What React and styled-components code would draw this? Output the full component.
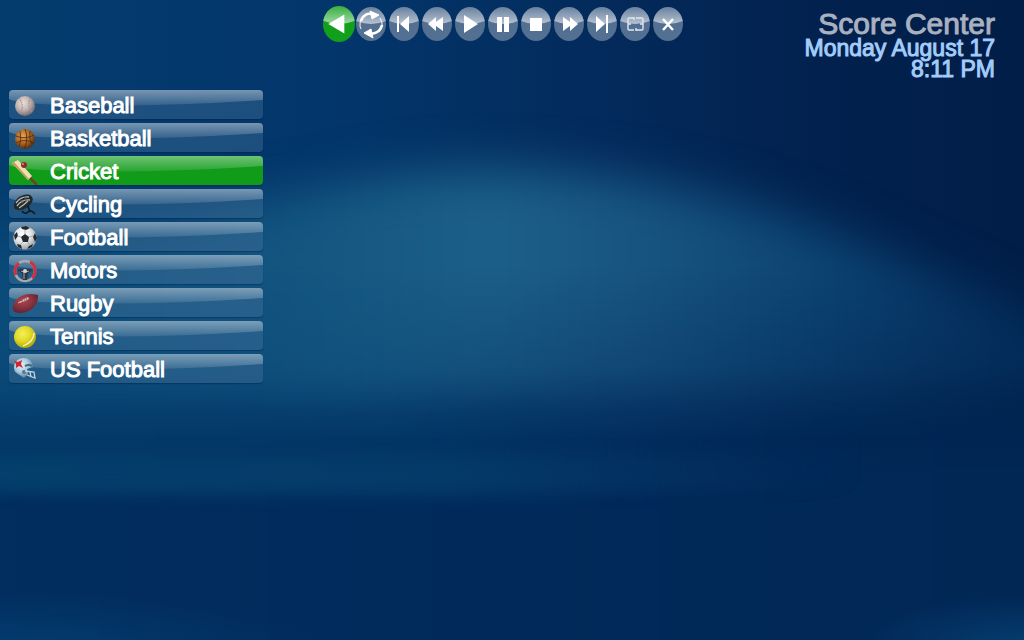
import React, { useState } from "react";
import styled, { createGlobalStyle, css } from "styled-components";

const GlobalStyle = createGlobalStyle`
  * { box-sizing: border-box; }
  body { margin: 0; background: #022c5c; font-family: "Liberation Sans", Arial, sans-serif; }
`;

const Screen = styled.div`
  position: relative;
  isolation: isolate;
  min-height: 100vh;
  overflow: hidden;
`;

const Wallpaper = styled.svg`
  position: absolute;
  inset: 0;
  width: 100%;
  height: 100%;
  z-index: -1;
`;

const Header = styled.header`
  display: grid;
  grid-template-columns: 1fr auto 1fr;
  align-items: start;
  padding: 6px 29px 0 11px;
  min-height: 90px;
`;

const Toolbar = styled.nav`
  grid-column: 2;
  display: flex;
  align-items: center;
  gap: 3px;
`;

const RoundButton = styled.button`
  display: block;
  padding: 0;
  border: 0;
  background: none;
  width: ${(p) => (p.$active ? 32 : 30)}px;
  height: ${(p) => (p.$active ? 36 : 34)}px;
  margin-right: ${(p) => (p.$active ? -2 : 0)}px;
  cursor: pointer;
  svg { display: block; width: 100%; height: 100%; }
`;

const Info = styled.div`
  text-align: right;
  white-space: nowrap;
`;

const Title = styled.h1`
  margin: 0;
  padding-top: 3px;
  font-size: 30px;
  line-height: 29px;
  font-weight: 400;
  color: #a9b1c0;
  -webkit-text-stroke: 1px #a9b1c0;
`;

const DateLine = styled.p`
  margin: 0;
  font-size: 23px;
  line-height: 21px;
  color: #a2ccfa;
  -webkit-text-stroke: 1px #a2ccfa;
`;

const Menu = styled.ul`
  list-style: none;
  margin: 0;
  padding: 0 9px;
  width: 272px;
  max-width: 100%;
  display: flex;
  flex-direction: column;
  gap: 4px;
`;

const MenuButton = styled.button`
  position: relative;
  isolation: isolate;
  overflow: hidden;
  display: flex;
  align-items: center;
  gap: 11px;
  width: 100%;
  height: 29px;
  padding: 0 0 0 2px;
  border: 0;
  border-radius: 4px;
  font: 400 22px/28px "Liberation Sans", Arial, sans-serif;
  color: #fff;
  text-align: left;
  cursor: pointer;
  background: rgba(78, 122, 160, 0.36);
  box-shadow: 0 1px 1px rgba(0, 20, 60, 0.35);
  ${(p) => p.$selected && css`background: #109b19;`}
`;

const Gloss = styled.svg`
  position: absolute;
  inset: 0;
  width: 100%;
  height: 100%;
  z-index: -1;
`;

const SportIcon = styled.svg`
  flex: none;
  width: 28px;
  height: 28px;
`;

const Label = styled.span`
  padding-top: 3px;
  -webkit-text-stroke: 1px #fff;
`;

const controls = [
  { name: "Back", art: <path d="M5 17 20 8v18Z" fill="#fff" /> },
  {
    name: "Refresh",
    art: (
      <g fill="none" stroke="#fff" strokeWidth="2">
        <path d="M5 14C7 8 12 5 18 8M26 18c-2 7-8 10-14 8" strokeWidth="2.600" />
        <path d="m14 4 9 4-7 4ZM17 31l-9-5 7-4Z" fill="#fff" strokeWidth="1" />
        <path d="M24 11c3 5 3 10-1 14M5 22c-2-4-1-9 2-12" strokeWidth="1.200" opacity=".8" />
      </g>
    ),
  },
  { name: "Previous", art: <path d="M8 9h2v16H8ZM11 17l9-8v16Z" fill="#fff" /> },
  { name: "Rewind", art: <path d="m6 17 8-7v5l7-5v14l-7-5v5Z" fill="#fff" /> },
  { name: "Play", art: <path d="M9 8 23 17 9 26Z" fill="#fff" /> },
  { name: "Pause", art: <path d="M9 10h5v15H9ZM16 10h5v15h-5Z" fill="#fff" /> },
  { name: "Stop", art: <path d="M9 11h12v13H9Z" fill="#fff" /> },
  { name: "Fast forward", art: <path d="m9 10 7 5v-5l8 7-8 7v-5l-7 5Z" fill="#fff" /> },
  { name: "Next", art: <path d="M9 9l9 8-9 8ZM19 8h2v18h-2Z" fill="#fff" /> },
  {
    name: "Window",
    art: (
      <g fill="none" stroke="#dfe7f0" strokeWidth="1.400">
        <path d="M14 11H9q-1 0-1 1v10q0 1 1 1h5M16 11h6q1 0 1 1v10q0 1-1 1h-6M8 17h3M20 17h3" />
        <path d="M14 10v3M16 21v3" />
      </g>
    ),
  },
  { name: "Close", art: <path d="m10 12 10 11M20 12 10 23" stroke="#fff" strokeWidth="2.400" /> },
];

function ControlButton({ control, active, onSelect }) {
  const id = "btn" + control.name.replace(" ", "");
  return (
    <RoundButton $active={active} aria-label={control.name} onClick={onSelect}>
      <svg viewBox="0 0 30 34" preserveAspectRatio="none" aria-hidden="true">
        <defs>
          <linearGradient id={id} x2="0" y2="1">
            <stop offset="0" stopColor="#fff" stopOpacity={active ? 0.15 : 0.12} />
            <stop offset="1" stopColor="#fff" stopOpacity={active ? 0.6 : 0.58} />
          </linearGradient>
          <clipPath id={id + "clip"}><ellipse cx="15" cy="17" rx="15" ry="17" /></clipPath>
        </defs>
        <g clipPath={`url(#${id}clip)`}>
          <path d="M0 0h30v34H0Z" fill={active ? "#12a01c" : "#536f91"} />
          <path d="M0 0h30v14q-15 6-30 0Z" fill={`url(#${id})`} />
        </g>
        {control.art}
      </svg>
    </RoundButton>
  );
}

const sports = [
  {
    name: "Baseball",
    art: (
      <>
        <circle cx="14" cy="15" r="10" fill="url(#baseballFill)" />
        <path d="M8 7q6 7 1 16M19 7q-3 8 2 14" fill="none" stroke="#b98b86" strokeWidth="1.200" strokeDasharray="1.500 .8" />
      </>
    ),
  },
  {
    name: "Basketball",
    art: (
      <>
        <circle cx="14" cy="15" r="10" fill="url(#basketFill)" />
        <path d="M5 12q9 4 18-1M9 7q2 8-1 16M14 5q4 10-1 20M19 7q-1 9 2 13M5 19q8-5 18 0" fill="none" stroke="#51280c" strokeWidth=".8" />
      </>
    ),
  },
  {
    name: "Cricket",
    art: (
      <>
        <path d="m18 20 7 7" stroke="#6f4222" strokeWidth="2.600" strokeLinecap="round" />
        <path d="m1 6 6-3 14 16-4 4Z" fill="#f1dfb0" />
        <path d="m1 6 16 17 1-1L3 5Z" fill="#c29b62" />
        <circle cx="13" cy="8" r="3" fill="#922c26" />
        <circle cx="12" cy="7" r="1" fill="#df8b7c" />
      </>
    ),
  },
  {
    name: "Cycling",
    art: (
      <>
        <path d="M3 17C2 9 12 3 19 5q5 3 1 9-6 6-11 6Q3 20 3 17Z" fill="#23282c" />
        <path d="M5 13Q10 6 18 7M6 16q5-7 13-6M8 18q6-4 9-7" fill="none" stroke="#b5b8b5" strokeWidth="1.300" />
        <path d="m9 9 3 4M14 7l1 5" stroke="#5d6365" />
        <path d="M11 21q3 4 6 1t7 2M17 16l2 6" fill="none" stroke="#101b24" strokeWidth="1.600" />
      </>
    ),
  },
  {
    name: "Football",
    art: (
      <>
        <circle cx="14" cy="15" r="11.500" fill="url(#ballFill)" />
        <path d="m14 11 4 3-1 5h-5l-2-5ZM10 4l5-1 4 2-4 2-4-1ZM3 12l3-3 1 4-3 4ZM24 10l2 5-2 4-2-5ZM6 21l4 1 1 4-4-2ZM18 23l4-2-1 3-5 2Z" fill="#25292c" />
        <path d="M14 11V7M18 14l4-1M17 19l2 4M12 19l-3 3M10 14l-4-1" stroke="#99a1a6" strokeWidth=".8" />
      </>
    ),
  },
  {
    name: "Motors",
    art: (
      <>
        <circle cx="14" cy="15" r="10" fill="none" stroke="#a5a8b0" strokeWidth="2.600" />
        <path d="M8 7a10 10 0 0 0-3 12M19 6a10 10 0 0 1 2 16" fill="none" stroke="#d42d3c" strokeWidth="3" />
        <path d="M6 14q8-3 16 0l-5 3-1 7h-4l-1-7Z" fill="#2d3441" />
        <path d="m10 15 3 1v7M18 15l-3 1" stroke="#9fa6ad" fill="none" />
        <circle cx="14" cy="15" r="2" fill="#d5d8da" />
      </>
    ),
  },
  {
    name: "Rugby",
    art: (
      <>
        <path d="M2 20C1 10 13 2 27 6c1 12-12 21-23 17Q2 22 2 20Z" fill="url(#rugbyFill)" />
        <path d="m7 14 11-5M9 12l1 2m2-4 1 3m1-4 1 3m1-4 1 3" stroke="#d9c6c6" strokeWidth=".9" />
      </>
    ),
  },
  {
    name: "Tennis",
    art: (
      <>
        <circle cx="14" cy="15" r="11" fill="url(#tennisFill)" />
        <path d="M23 11q0 9-11 13" fill="none" stroke="#f8f8cc" strokeWidth="1.300" />
      </>
    ),
  },
  {
    name: "US Football",
    art: (
      <>
        <path d="M3 11Q5 3 13 3q8 0 9 9l-6 2 1 5-4 4-6-4q-5-3-4-8Z" fill="url(#helmetFill)" />
        <path d="m3 6 4 1 4-2-1 4 2 4-4-2-3 2v-4Z" fill="#d6232d" />
        <path d="M14 11q4-2 7 0" stroke="#436b83" strokeWidth="2" fill="none" />
        <circle cx="13" cy="17" r="2" fill="#537990" />
        <path d="M14 16l9 1 1 6-8-3M19 17l1 5" fill="none" stroke="#c5d3dd" strokeWidth="1.300" />
      </>
    ),
  },
];

function Ball({ id, stops }) {
  return (
    <radialGradient id={id} cx=".4" cy=".35" r=".7">
      {stops.map((color, i) => (
        <stop key={color} offset={i / (stops.length - 1)} stopColor={color} />
      ))}
    </radialGradient>
  );
}

function Background() {
  return (
    <Wallpaper viewBox="0 0 1024 640" preserveAspectRatio="none" aria-hidden="true">
      <defs>
        <linearGradient id="base" x2="1" y2="0">
          <stop offset="0" stopColor="#043c6e" />
          <stop offset=".35" stopColor="#03356a" />
          <stop offset=".6" stopColor="#032a5b" />
          <stop offset=".8" stopColor="#02214e" />
          <stop offset="1" stopColor="#011e48" />
        </linearGradient>
        <linearGradient id="floor" x2="1" y2="0">
          <stop offset="0" stopColor="#012e60" />
          <stop offset=".5" stopColor="#012a5a" />
          <stop offset="1" stopColor="#012653" />
        </linearGradient>
        <linearGradient id="band" x2="1" y2="0">
          <stop offset="0" stopColor="#05426f" />
          <stop offset=".55" stopColor="#053c6b" />
          <stop offset="1" stopColor="#04315f" stopOpacity="0" />
        </linearGradient>
        <linearGradient id="waveFill" gradientUnits="userSpaceOnUse" x1="0" y1="0" x2="1024" y2="0">
          <stop offset="0" stopColor="#0b4c7a" />
          <stop offset=".25" stopColor="#12537f" />
          <stop offset=".48" stopColor="#1c5f88" />
          <stop offset=".63" stopColor="#17547f" />
          <stop offset=".8" stopColor="#0c4472" />
          <stop offset="1" stopColor="#04305f" />
        </linearGradient>
        <linearGradient id="waveFade" gradientUnits="userSpaceOnUse" x1="0" y1="150" x2="0" y2="440">
          <stop offset="0" stopColor="#fff" />
          <stop offset=".4" stopColor="#fff" />
          <stop offset=".75" stopColor="#b0b0b0" />
          <stop offset="1" stopColor="#000" />
        </linearGradient>
        <mask id="waveMask" maskUnits="userSpaceOnUse" x="-200" y="0" width="1424" height="640">
          <path d="M-200 0H1224V640H-200Z" fill="url(#waveFade)" />
        </mask>
        <radialGradient id="corner">
          <stop offset="0" stopColor="#07457b" stopOpacity=".9" />
          <stop offset="1" stopColor="#07457b" stopOpacity="0" />
        </radialGradient>
        <filter id="soft24" colorInterpolationFilters="sRGB" filterUnits="userSpaceOnUse" x="-200" y="-100" width="1424" height="900">
          <feGaussianBlur stdDeviation="24" />
        </filter>
        <filter id="soft60" colorInterpolationFilters="sRGB" filterUnits="userSpaceOnUse" x="-300" y="-200" width="1624" height="1100">
          <feGaussianBlur stdDeviation="60 34" />
        </filter>
        <filter id="soft8" colorInterpolationFilters="sRGB" filterUnits="userSpaceOnUse" x="-200" y="300" width="1424" height="400">
          <feGaussianBlur stdDeviation="8" />
        </filter>
        <Ball id="baseballFill" stops={["#e9e2dc", "#c0b5b2", "#696269"]} />
        <Ball id="basketFill" stops={["#e4a052", "#b16b25", "#49260f"]} />
        <Ball id="ballFill" stops={["#ffffff", "#e3e6e8", "#8d979f"]} />
        <Ball id="rugbyFill" stops={["#a84750", "#8c3440", "#5c2130"]} />
        <Ball id="tennisFill" stops={["#f5ee5b", "#e2d925", "#aaa10e"]} />
        <Ball id="helmetFill" stops={["#e4f1f8", "#a9cbdd", "#477795"]} />
      </defs>
      <path d="M0 0h1024v640H0Z" fill="url(#base)" />
      <path d="M-150 420H1180V800H-150Z" fill="url(#floor)" filter="url(#soft24)" />
      <path d="M-150 220H420V400H-150Z" fill="#0a4977" opacity=".8" filter="url(#soft60)" />
      <g mask="url(#waveMask)">
        <path
          d="M-150 285C120 260 260 190 420 172C600 158 760 200 860 242C960 285 1060 330 1180 380V520H-150Z"
          fill="url(#waveFill)"
          filter="url(#soft24)"
        />
      </g>
      <path d="M-60 412H860V488Q400 498-60 490Z" fill="url(#band)" opacity=".55" filter="url(#soft8)" />
      <path d="M-60 456H860V488Q400 498-60 490Z" fill="url(#band)" opacity=".8" filter="url(#soft8)" />
      <ellipse cx="1024" cy="645" rx="170" ry="50" fill="url(#corner)" opacity=".8" />
      <ellipse cx="0" cy="650" rx="320" ry="60" fill="url(#corner)" opacity=".7" />
    </Wallpaper>
  );
}

export default function App() {
  const [sport, setSport] = useState("Cricket");
  const [control, setControl] = useState("Back");
  return (
    <Screen>
      <GlobalStyle />
      <Background />
      <Header>
        <Toolbar aria-label="Playback">
          {controls.map((c) => (
            <ControlButton key={c.name} control={c} active={c.name === control} onSelect={() => setControl(c.name)} />
          ))}
        </Toolbar>
        <Info>
          <Title>Score Center</Title>
          <DateLine>Monday August 17</DateLine>
          <DateLine>8:11 PM</DateLine>
        </Info>
      </Header>
      <main>
        <Menu>
          {sports.map((s) => (
            <li key={s.name}>
              <MenuButton $selected={s.name === sport} onClick={() => setSport(s.name)}>
                <Gloss viewBox="0 0 254 29" preserveAspectRatio="none" aria-hidden="true">
                  <defs>
                    <linearGradient id="gloss" x2="0" y2="1">
                      <stop offset="0" stopColor="#fff" stopOpacity=".4" />
                      <stop offset="1" stopColor="#fff" stopOpacity=".1" />
                    </linearGradient>
                  </defs>
                  <path d="M0 0H254V10Q150 17 60 15Q10 14 0 9Z" fill="url(#gloss)" />
                </Gloss>
                <SportIcon viewBox="0 0 28 28" aria-hidden="true">{s.art}</SportIcon>
                <Label>{s.name}</Label>
              </MenuButton>
            </li>
          ))}
        </Menu>
      </main>
    </Screen>
  );
}
